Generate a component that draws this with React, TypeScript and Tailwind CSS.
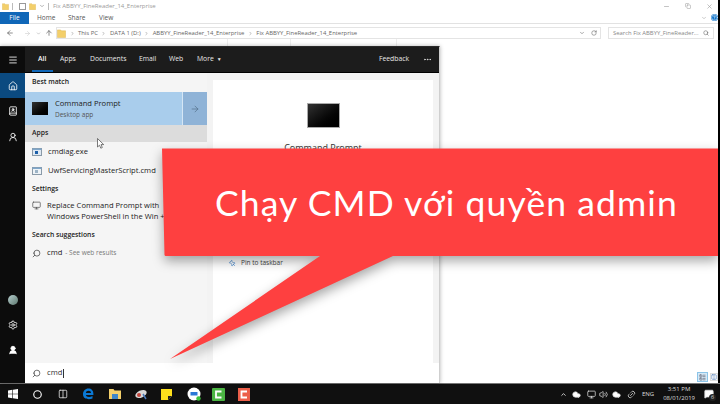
import React from 'react';
import {
  Menu, Home, BookUser, Settings, Search, ArrowRight, ArrowLeft, ArrowUp, ChevronDown, ChevronRight, ChevronUp,
  RotateCw, Minus, Copy, X, Monitor, Volume2, Cloud, Link2, Circle, Columns2, Pin, MessageSquare, HelpCircle, Ellipsis, LayoutList, UserRound,
} from 'lucide-react';

const crumbs = ['This PC', 'DATA 1 (D:)', 'ABBYY_FineReader_14_Enterprise', 'Fix ABBYY_FineReader_14_Enterprise'];
const tabs = ['All', 'Apps', 'Documents', 'Email', 'Web'];

const ExeIcon = ({ light }: { light?: boolean }) => (
  <svg width="10" height="8" viewBox="0 0 10 8">
    <rect x="0.5" y="0.5" width="9" height="7" fill={light ? '#eef3f7' : '#dfe8f2'} stroke="#8a9aa8" />
    <rect x="0.5" y="0.5" width="9" height="1.5" fill="#7fa6c9" />
    <rect x="3" y="3" width="3" height="3" fill={light ? '#9db4c6' : '#1c5fa8'} />
  </svg>
);

const WinLogo = () => (
  <svg width="10" height="10" viewBox="0 0 10 10" fill="#fff">
    <path d="M0 1.5 4.400.8v3.900H0zM5 .7 10 0v4.700H5zM0 5.300h4.400v3.900L0 8.500zM5 5.300h5V10l-5-.7z" />
  </svg>
);

const EdgeLogo = () => (
  <svg width="12" height="12" viewBox="0 0 12 12">
    <path d="M1 6.500C1 2.800 3.400.6 6.400.6c3 0 5 2 5 5.400v1H3.900c.2 2 3.600 2.600 6.600 1v2.400c-3.800 1.700-9.500.7-9.500-3.900zM3.900 5H9c0-1.500-1-2.300-2.500-2.300S4.100 3.500 3.900 5z" fill="#0a78d4" />
  </svg>
);

const FolderIcon = ({ size = 10 }: { size?: number }) => (
  <svg width={size} height={size} viewBox="0 0 10 10">
    <path d="M0.500 1h3.500l1 1h4.500v7.500h-9z" fill="#f3cf6a" stroke="#d9b04c" strokeWidth="0.5" />
  </svg>
);

const App: React.FC = () => {
  return (
    <div className="relative flex h-[404px] w-[720px] flex-col overflow-hidden bg-white font-['Open_Sans',sans-serif] text-[#333]">
      <div className="flex min-h-0 flex-1">
        {/* Explorer window */}
        <div className="relative flex min-w-0 flex-1 flex-col bg-white">
          <div className="flex h-3 items-center gap-[3px] pl-[2px] text-[6px] text-[#9a9a9a]">
            <FolderIcon size={7} />
            <span className="h-[7px] w-px bg-[#bbb]" />
            <span className="ml-[3px] h-[7px] w-[7px] border border-[#999] bg-white" />
            <FolderIcon size={7} />
            <ChevronDown className="h-[6px] w-[6px]" strokeWidth={3} />
            <span className="h-[7px] w-px bg-[#bbb]" />
            <span className="ml-[1px] whitespace-nowrap">Fix ABBYY_FineReader_14_Enterprise</span>
            <div className="ml-auto mr-[5px] flex items-center gap-[15px] text-[#999]">
              <Minus className="h-[7px] w-[7px]" />
              <Copy className="h-[6px] w-[6px]" />
              <X className="h-[7px] w-[7px]" />
            </div>
          </div>
          <div className="flex h-3 items-center border-b border-[#e2e2e2] text-[6.5px] text-[#555]">
            <span className="flex h-3 w-[29px] items-center justify-center bg-[#1067b8] text-white">File</span>
            <span className="ml-[8px] w-[31px]">Home</span>
            <span className="w-[31px]">Share</span>
            <span>View</span>
            <div className="ml-auto flex items-center gap-[4px] pr-0">
              <ChevronDown className="h-[6px] w-[6px] text-[#999]" />
              <HelpCircle className="h-[7px] w-[7px] rounded-full bg-[#1477cc] text-white" />
            </div>
          </div>
          <div className="mt-[3px] flex h-[12px] items-center text-[5.900px] text-[#666]">
            <ArrowLeft className="ml-[6px] h-[8px] w-[8px] text-[#555]" />
            <ArrowRight className="ml-[9.500px] h-[7px] w-[7px] text-[#ccc]" />
            <ChevronDown className="ml-[5px] h-[5px] w-[5px] text-[#888]" />
            <ArrowUp className="ml-[4.500px] h-[8px] w-[8px] text-[#555]" />
            <div className="ml-[3px] flex h-[12px] w-[545px] items-center gap-[3.500px] border border-[#e4e4e4] pr-[3px]">
              <FolderIcon size={9} />
              {crumbs.map((c) => (
                <React.Fragment key={c}>
                  <ChevronRight className="h-[5px] w-[5px] shrink-0 text-[#666]" />
                  <span className="whitespace-nowrap">{c}</span>
                </React.Fragment>
              ))}
              <ChevronDown className="ml-auto h-[6px] w-[6px] text-[#555]" />
              <RotateCw className="ml-[3px] h-[6px] w-[6px] text-[#555]" />
            </div>
            <div className="ml-[7px] flex h-[12px] w-[106px] items-center justify-between border border-[#e4e4e4] px-[4px] text-[#888]">
              <span className="whitespace-nowrap">Search Fix ABBYY_FineReader...</span>
              <Search className="h-[6px] w-[6px] text-[#555]" />
            </div>
          </div>
          {/* file list column heads */}
          <div className="flex h-[7px] shrink-0">
            <div className="w-[228px] border-r border-[#eee]" />
            <div className="w-[63px] border-r border-[#eee]" />
            <div className="w-[106px] border-r border-[#eee]" />
          </div>
          <div className="flex-1" />
          {/* view toggles */}
          <div className="absolute bottom-[1px] right-0 flex items-center gap-[2px]">
            <span className="flex h-[10px] w-[11px] items-center justify-center border border-[#8cc4e8] bg-[#d5e9f7]">
              <LayoutList className="h-[7px] w-[7px] text-[#556]" />
            </span>
            <span className="flex h-[8px] w-[8px] items-center justify-center border border-[#ddd]">
              <Columns2 className="h-[6px] w-[6px] text-[#36a]" />
            </span>
          </div>
        </div>
        <div className="w-[2px] bg-black" />
      </div>

      {/* Taskbar */}
      <div className="flex h-[21px] shrink-0 items-center border-t border-[#777] bg-[#101010] text-white">
        <div className="ml-[8px] w-[25px]"><WinLogo /></div>
        <div className="w-[25px]"><Circle className="h-[9px] w-[9px]" strokeWidth={3} /></div>
        <div className="w-[24px] pl-[0px]"><Columns2 className="h-[10px] w-[10px] text-[#ddd]" /></div>
        <div className="w-[27px]"><EdgeLogo /></div>
        <div className="w-[26px]">
          <svg width="12" height="12" viewBox="0 0 12 12">
            <path d="M0 1h4.500l1 1.500H12V11H0z" fill="#f3cf6a" />
            <rect x="3" y="6" width="6" height="5" fill="#3f86c8" />
          </svg>
        </div>
        <div className="w-[26px]">
          <svg width="13" height="11" viewBox="0 0 13 11">
            <ellipse cx="6" cy="5" rx="6" ry="3.500" fill="#d8d8d8" transform="rotate(-25 6 5)" />
            <circle cx="4" cy="6" r="2" fill="#c2453c" />
            <path d="M8 5l3 5" stroke="#4a78b8" strokeWidth="1.500" />
          </svg>
        </div>
        <div className="w-[26px]">
          <svg width="11" height="11" viewBox="0 0 11 11">
            <path d="M0 0h11v7l-4 4H0z" fill="#ffe11c" />
            <path d="M7 11V7h4z" fill="#222" />
          </svg>
        </div>
        <div className="w-[25px]">
          <svg width="14" height="14" viewBox="0 0 14 14">
            <circle cx="7" cy="7" r="6.500" fill="#fff" />
            <path d="M3.500 5h7v3.500h-7z" fill="#2b78d6" />
            <circle cx="11.500" cy="11.500" r="2.200" fill="#3cc13c" />
          </svg>
        </div>
        <div className="w-[26px]">
          <svg width="13" height="13" viewBox="0 0 13 13">
            <rect width="13" height="13" rx="1" fill="#4bb543" />
            <path d="M9.500 3.500H4v6h5.500" fill="none" stroke="#fff" strokeWidth="1.800" />
          </svg>
        </div>
        <div>
          <svg width="12" height="13" viewBox="0 0 12 13">
            <rect width="12" height="13" fill="#ec5f4a" />
            <path d="M9 3.500H3.500v6H9" fill="none" stroke="#fff" strokeWidth="1.800" />
          </svg>
        </div>
        <div className="ml-auto flex items-center text-[#ddd]">
          <ChevronUp className="h-[7px] w-[7px]" strokeWidth={3} />
          <Cloud className="ml-[5px] h-[9px] w-[9px] fill-white" />
          <Monitor className="ml-[6px] h-[9px] w-[9px]" />
          <Volume2 className="ml-[3px] h-[9px] w-[9px]" />
          <Cloud className="ml-[4px] h-[9px] w-[9px] fill-white" />
          <Link2 className="ml-[6px] h-[9px] w-[9px] -rotate-45" />
          <span className="ml-[6px] text-[6px]">ENG</span>
          <div className="ml-[9px] flex flex-col items-center text-[6px] leading-[9px]">
            <span>3:51 PM</span>
            <span>08/01/2019</span>
          </div>
          <div className="relative ml-[9px] mr-[6px]">
            <MessageSquare className="h-[10px] w-[10px] fill-white" />
            <span className="absolute -bottom-[2px] -right-[2px] flex h-[7px] w-[7px] items-center justify-center rounded-full bg-[#222] text-[5.500px]">6</span>
          </div>
        </div>
      </div>

      {/* Start menu search window */}
      <div className="absolute left-0 top-[46px] flex h-[337px] w-[440px] overflow-hidden border-r border-t border-[#2a2a2a] border-r-[#cfcfcf] bg-white shadow-[0_0_4px_rgba(0,0,0,0.3)]">
        <div className="flex w-[25px] shrink-0 flex-col items-center bg-[#0c0c0c] text-white">
          <div className="flex h-[26px] items-center"><Menu className="h-[10px] w-[10px]" /></div>
          <div className="flex h-[25px] w-full items-center justify-center bg-[#0b4a80]"><Home className="h-[10px] w-[10px]" /></div>
          <div className="flex h-[25px] items-center"><BookUser className="h-[10px] w-[10px]" /></div>
          <div className="flex h-[27px] items-center"><UserRound className="h-[10px] w-[10px]" /></div>
          <div className="mt-auto flex h-[25px] items-center">
            <span className="block h-[10px] w-[10px] rounded-full bg-gradient-to-br from-[#b7cfd0] to-[#5f7a70]" />
          </div>
          <div className="flex h-[25px] items-center"><Settings className="h-[10px] w-[10px]" /></div>
          <div className="mb-[21px] flex h-[25px] items-center"><UserRound className="h-[10px] w-[10px] fill-white" /></div>
        </div>

        <div className="flex min-w-0 flex-1 flex-col">
          <div className="flex h-[26px] shrink-0 items-center border-b border-black bg-[#1c1c1c] pr-[7px] text-[6.800px] text-[#e8e8e8]">
            {tabs.map((t, i) => (
              <span key={t} className={`relative flex h-full items-center ${i === 0 ? 'ml-[13px] w-[22px] font-semibold text-white' : i === 1 ? 'w-[30px]' : i === 2 ? 'w-[49px]' : i === 3 ? 'w-[30px]' : 'w-[28px]'}`}>
                {t}
                {i === 0 && <span className="absolute bottom-0 -left-[6px] h-[2px] w-[21px] bg-[#1067b8]" />}
              </span>
            ))}
            <span className="flex items-center gap-[3px]">More <span className="text-[5px]">▼</span></span>
            <span className="ml-auto">Feedback</span>
            <Ellipsis className="ml-[14px] h-[9px] w-[9px]" />
          </div>

          <div className="flex min-h-0 flex-1 bg-[#f3f3f3]">
            <div className="flex w-[182px] shrink-0 flex-col bg-[#f5f5f5] text-[7.600px] text-[#222]">
              <div className="flex h-[19px] items-center pl-[7px] text-[6.800px] font-semibold">Best match</div>
              <div className="flex h-[33px] bg-[#a9cdec]">
                <div className="flex flex-1 items-center">
                  <span className="ml-[7px] block h-[13px] w-[16px] bg-gradient-to-br from-[#333] to-black" />
                  <div className="ml-[7px] flex flex-col leading-[11px]">
                    <span>Command Prompt</span>
                    <span className="text-[6.500px] text-[#555]">Desktop app</span>
                  </div>
                </div>
                <div className="flex w-[25px] items-center justify-center border-l border-[#d5e6f5] bg-[#8fb3d7]">
                  <ArrowRight className="h-[10px] w-[10px] text-[#4d6880]" strokeWidth={1.500} />
                </div>
              </div>
              <div className="flex h-[17px] items-center bg-[#dcdcdc] pl-[7px] text-[6.800px] font-semibold">Apps</div>
              <div className="flex h-[19px] items-center pl-[7px]">
                <ExeIcon /><span className="ml-[6px]">cmdiag.exe</span>
                <ChevronRight className="ml-auto mr-[11px] h-[6px] w-[6px] text-[#999]" />
              </div>
              <div className="flex h-[19px] items-center pl-[7px]">
                <ExeIcon light /><span className="ml-[6px] whitespace-nowrap">UwfServicingMasterScript.cmd</span>
              </div>
              <div className="mb-[2px] flex h-[18px] items-center pl-[7px] text-[6.800px] font-semibold">Settings</div>
              <div className="flex pl-[7px] leading-[11px]">
                <Monitor className="mt-[1px] h-[9px] w-[9px] shrink-0 text-[#555]" />
                <span className="ml-[6px] whitespace-nowrap">Replace Command Prompt with<br />Windows PowerShell in the Win + X</span>
              </div>
              <div className="mt-[4px] flex h-[18px] items-center pl-[7px] text-[6.800px] font-semibold">Search suggestions</div>
              <div className="flex h-[18px] items-center pl-[7px]">
                <Search className="h-[9px] w-[9px] -scale-x-100 text-[#444]" />
                <span className="ml-[6px]">cmd</span>
                <span className="ml-[3px] text-[6.500px] text-[#777]">- See web results</span>
              </div>
            </div>
            <div className="mt-[7px] ml-[6px] flex w-[220px] flex-col items-center bg-white">
              <span className="mt-[23px] block h-[25px] w-[33px] border border-[#aaa] bg-gradient-to-br from-[#333] to-black" />
              <span className="mt-[13px] text-[9px] text-[#333]">Command Prompt</span>
              <div className="mt-auto mb-[95px] flex w-full items-center pl-[16px] text-[6.500px] text-[#444]">
                <Pin className="h-[7px] w-[7px] -rotate-45 text-[#2a78c8]" />
                <span className="ml-[5px]">Pin to taskbar</span>
              </div>
            </div>
          </div>

          <div className="flex h-[20px] shrink-0 items-center bg-white pl-[7px] text-[7.600px] text-[#333]">
            <Search className="h-[9px] w-[9px] -scale-x-100 text-[#444]" />
            <span className="ml-[6px]">cmd</span>
            <span className="ml-px h-[9px] w-px bg-[#333]" />
          </div>
        </div>
      </div>

      {/* Mouse cursor */}
      <svg className="absolute left-[97px] top-[138px]" width="8" height="11" viewBox="0 0 8 11">
        <path d="M.5.5v8.500l2-1.800 1.300 3 1.500-.7-1.300-2.900h2.700z" fill="#fff" stroke="#444" strokeWidth="0.700" />
      </svg>

      {/* Red callout */}
      <svg className="absolute left-0 top-0 [filter:drop-shadow(0_5px_6px_rgba(0,0,0,0.35))]" width="720" height="404" viewBox="0 0 720 404">
        <path d="M162 148.500H718V256H393L170 359 320 256H165.500Q165 256 164.500 255z" fill="#fe4040" />
      </svg>
      <div className="absolute left-[215px] top-[182px] whitespace-nowrap font-['Lato',sans-serif] text-[35.500px] leading-[42px] tracking-[1.1px] text-white">
        Chạy CMD với quyền admin
      </div>
    </div>
  );
};

export default App;
